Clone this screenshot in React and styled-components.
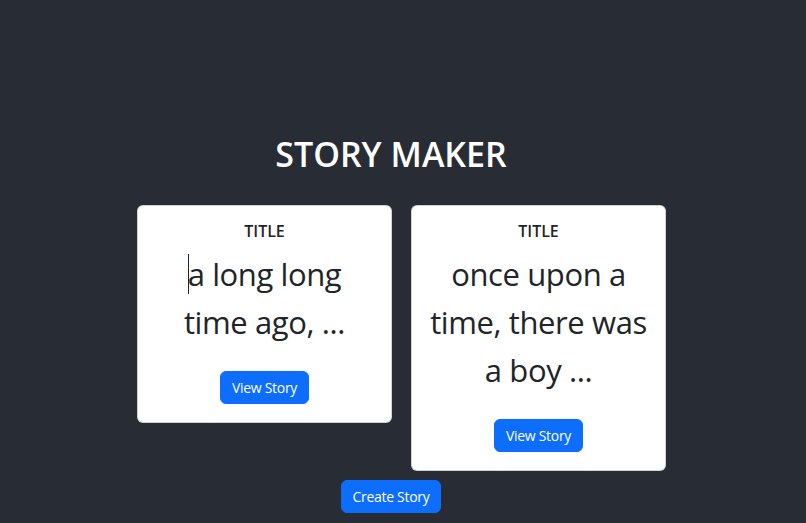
import styled, { createGlobalStyle } from "styled-components";

const GlobalStyle = createGlobalStyle`
  * {
    box-sizing: border-box;
  }
  body {
    margin: 0;
    background-color: #282c34;
    font-family: "Open Sans", "Noto Sans", sans-serif;
  }
`;

const Page = styled.div`
  min-height: 100vh;
  padding-top: 134px;
  display: flex;
  flex-direction: column;
  align-items: center;
  padding-right: 24px;
`;

const Heading = styled.h1`
  margin: 0 0 30px;
  font-size: 34px;
  line-height: 1.2;
  font-weight: 600;
  color: #ffffff;
`;

const CardRow = styled.div`
  display: flex;
  align-items: flex-start;
  gap: 19px;
  margin-left: 21px;
`;

const Card = styled.div`
  width: 255px;
  background-color: #ffffff;
  border: 1px solid rgba(0, 0, 0, 0.175);
  border-radius: 6px;
  padding: 16px 16px 18px;
  display: flex;
  flex-direction: column;
  align-items: center;
  text-align: center;
  color: #212529;
`;

const CardTitle = styled.h5`
  margin: 0 0 9px;
  font-size: 16px;
  line-height: 1.2;
  font-weight: 600;
`;

const StoryText = styled.p`
  margin: 0 0 25px;
  font-size: 31px;
  letter-spacing: -0.4px;
  line-height: 48px;
  font-weight: 400;
`;

const Caret = styled.span`
  display: inline-block;
  width: 0;
  height: 40px;
  border-left: 1px solid #212529;
  vertical-align: -8px;
  margin-right: -1px;
`;

const Button = styled.button`
  background-color: #0d6efd;
  color: #ffffff;
  border: 1px solid #0d6efd;
  border-radius: 6px;
  padding: 5px 11px;
  font-family: inherit;
  font-size: 14px;
  letter-spacing: -0.3px;
  line-height: 21px;
  cursor: pointer;
  margin-top: ${(p) => p.$top || 0}px;
`;

const stories = [
  { id: 1, title: "TITLE", text: "a long long time ago, ...", editing: true },
  { id: 2, title: "TITLE", text: "once upon a time, there was a boy ..." },
];

function StoryCard({ story }) {
  return (
    <Card>
      <CardTitle>{story.title}</CardTitle>
      <StoryText>
        {story.editing && <Caret />}
        {story.text}
      </StoryText>
      <Button>View Story</Button>
    </Card>
  );
}

export default function App() {
  return (
    <>
      <GlobalStyle />
      <Page>
        <Heading>STORY MAKER</Heading>
        <CardRow>
          {stories.map((s) => (
            <StoryCard key={s.id} story={s} />
          ))}
        </CardRow>
        <Button $top={9}>Create Story</Button>
      </Page>
    </>
  );
}
